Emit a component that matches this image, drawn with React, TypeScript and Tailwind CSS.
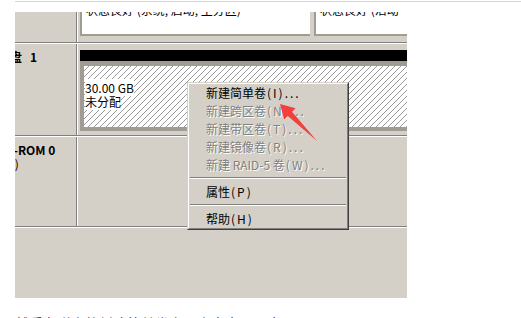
import React from 'react';

const hatch =
  'bg-[repeating-linear-gradient(135deg,#ffffff_0px,#ffffff_3.2px,#999999_3.2px,#999999_4.24px)]';

const RowLine: React.FC = () => (
  <>
    <div className="h-px bg-[#808080]" />
    <div className="h-px bg-white" />
  </>
);

const Divider: React.FC = () => <div className="w-[2px] shrink-0 border-l border-[#808080] bg-white" />;

interface MenuItemProps {
  label: string;
  hotkey: string;
  disabled?: boolean;
}

const MenuItem: React.FC<MenuItemProps> = ({ label, hotkey, disabled }) => (
  <div
    className={
      disabled
        ? 'h-[18px] pl-[17px] leading-[18px] whitespace-nowrap text-[#808080] [text-shadow:1px_1px_0_#ffffff]'
        : 'h-[18px] pl-[17px] leading-[18px] whitespace-nowrap text-black'
    }
  >
    {label}
    <span className="ml-px tracking-[2px]">{hotkey}</span>
  </div>
);

const Separator: React.FC = () => (
  <div className="h-[9px] px-px pt-[3px]">
    <div className="h-px bg-[#808080]" />
    <div className="h-px bg-white" />
  </div>
);

const App: React.FC = () => {
  return (
    <div className="relative w-[521px] h-[318px] overflow-hidden bg-white font-['Noto_Sans_CJK_SC',sans-serif]">
      <div className="ml-[15px] mt-px h-px bg-[#d6d6d6]" />

      <div className="relative ml-[15px] mt-[10px] w-[392px] h-[286px] overflow-hidden bg-[#d4d0c8] text-[12px] leading-[14px] text-black">
        {/* disk 0, cut off at the top */}
        <div className="flex h-[30px]">
          <div className="w-[61px] shrink-0" />
          <Divider />
          <div className="flex flex-1 gap-[4px] pl-[2px]">
            <div className="w-[230px] h-[24px] shrink-0 border-l-2 border-b-2 border-[#a09c94] bg-white pl-[4px]">
              <div className="-mt-[9px] whitespace-nowrap">状态良好 (系统, 启动, 主分区)</div>
            </div>
            <div className="w-[100px] h-[24px] shrink-0 border-l-2 border-b-2 border-[#a09c94] bg-white pl-[4px]">
              <div className="-mt-[9px] whitespace-nowrap">状态良好 (活动</div>
            </div>
          </div>
        </div>
        <RowLine />

        {/* disk 1 */}
        <div className="flex h-[91px]">
          <div className="w-[61px] shrink-0 pt-[6px]">
            <div className="-ml-[17px] whitespace-nowrap font-bold">
              磁盘<span className="ml-[8px]">1</span>
            </div>
          </div>
          <Divider />
          <div className="flex-1 pl-[2px] pt-[6px]">
            <div className="w-[340px] h-[11px] bg-black" />
            <div className={`w-[340px] h-[70px] border-[#a09c94] border-t-[5px] border-x-4 border-b-4 pl-px pt-[15px] ${hatch}`}>
              <div>
                <span className="bg-white">30.00 GB</span>
              </div>
              <div>
                <span className="bg-white">未分配</span>
              </div>
            </div>
          </div>
        </div>
        <RowLine />

        {/* cd-rom */}
        <div className="flex h-[89px]">
          <div className="w-[61px] shrink-0 pt-[6px]">
            <div className="-ml-[18px] whitespace-nowrap font-bold">CD-ROM 0</div>
            <div className="-ml-[16px] whitespace-nowrap">(D:)</div>
          </div>
          <Divider />
          <div className="flex-1" />
        </div>
        <RowLine />

        {/* context menu */}
        <div className="absolute left-[172px] top-[70px] w-[162px] border border-t-[#d4d0c8] border-l-[#d4d0c8] border-r-[#404040] border-b-[#404040] bg-[#d4d0c8]">
          <div className="border border-t-white border-l-white border-r-[#808080] border-b-[#808080]">
            <MenuItem label="新建简单卷" hotkey="(I)..." />
            <MenuItem label="新建跨区卷" hotkey="(N)..." disabled />
            <MenuItem label="新建带区卷" hotkey="(T)..." disabled />
            <MenuItem label="新建镜像卷" hotkey="(R)..." disabled />
            <MenuItem label="新建 RAID-5 卷" hotkey="(W)..." disabled />
            <Separator />
            <MenuItem label="属性" hotkey="(P)" />
            <Separator />
            <MenuItem label="帮助" hotkey="(H)" />
          </div>
        </div>
      </div>

      <p className="ml-[15px] mt-[15px] whitespace-nowrap text-[14px] leading-[21px] text-[#333333]">
        然后在弹出的新建简单卷向导中点击下一步
      </p>

      {/* red annotation arrow */}
      <svg className="pointer-events-none absolute left-0 top-0" width="521" height="318" viewBox="0 0 521 318">
        <polygon
          points="280,104 295.6,108.2 292,111.8 317,141 287.8,116 284.2,119.6"
          fill="#f2403c"
        />
      </svg>
    </div>
  );
};

export default App;
